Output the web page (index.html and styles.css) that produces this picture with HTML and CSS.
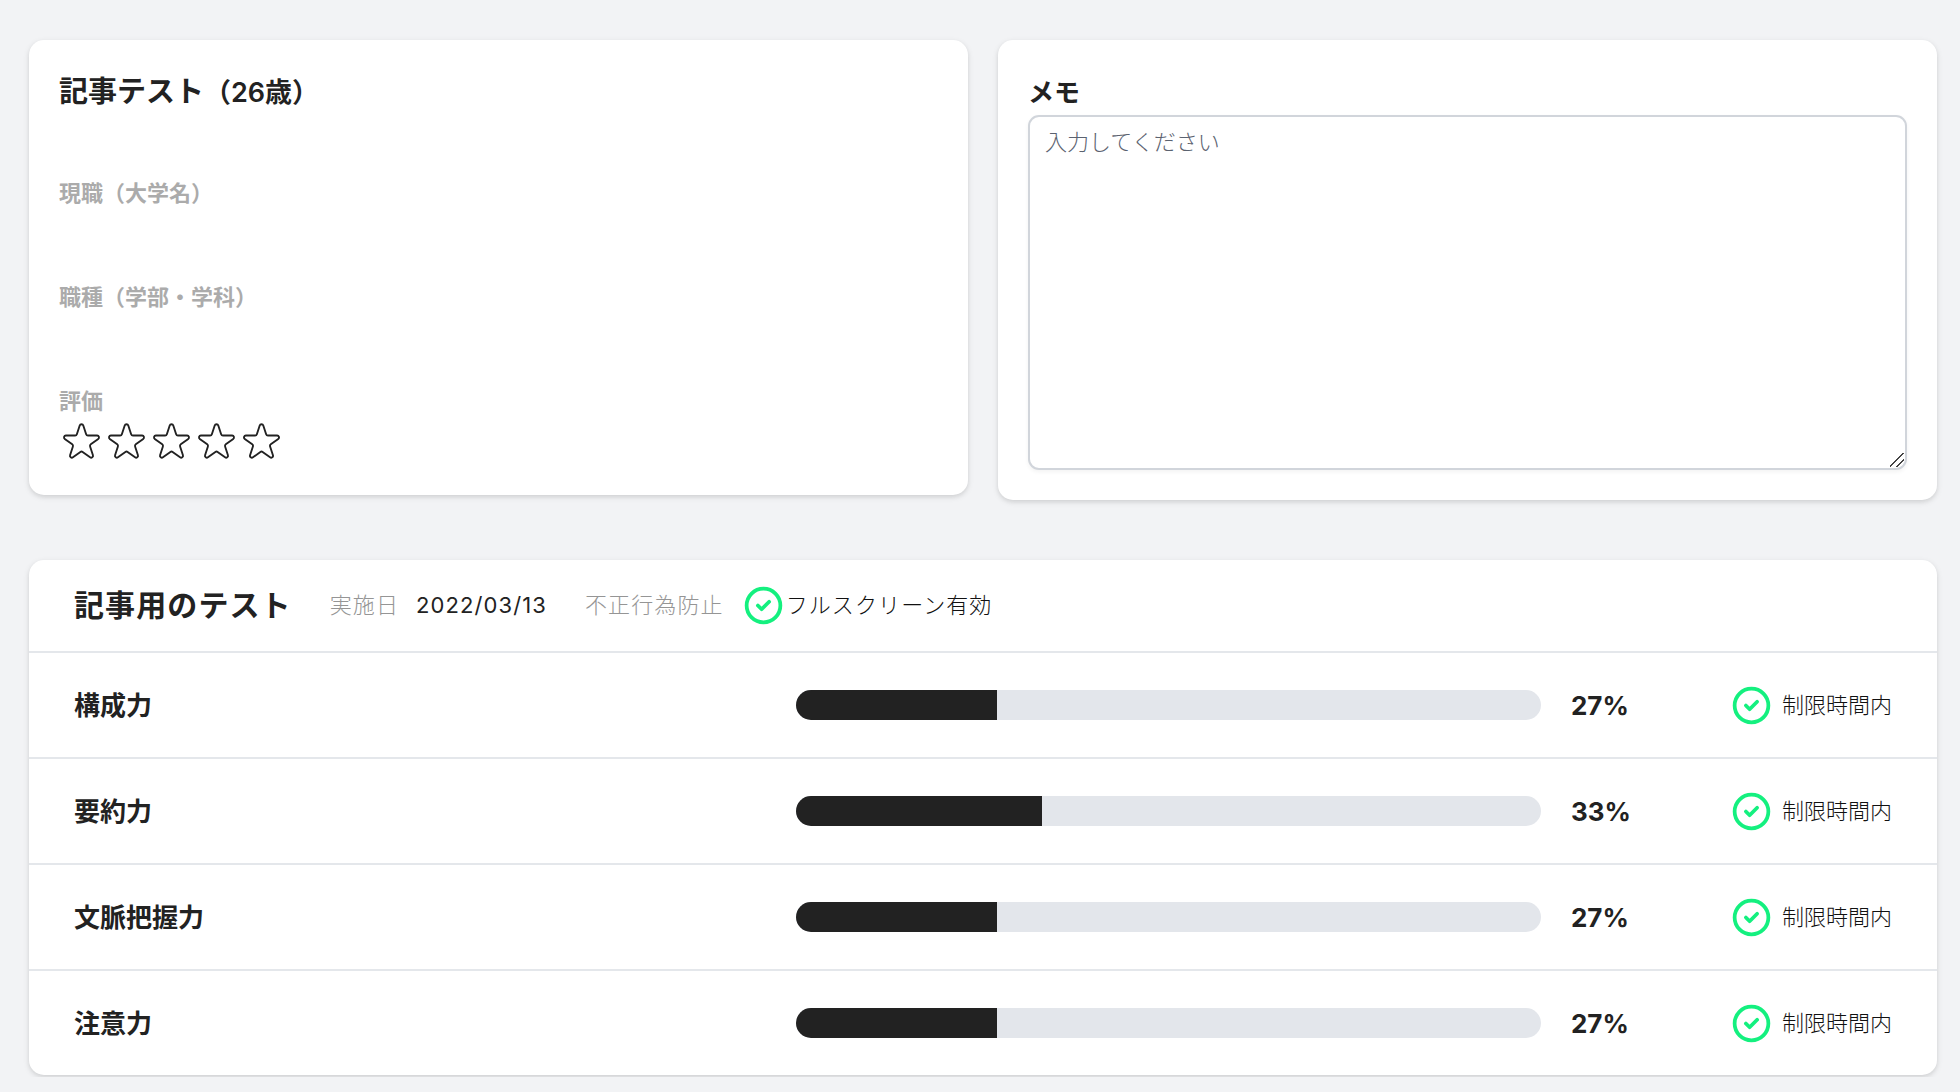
FILE: index.html
```html
<!DOCTYPE html>
<html lang="ja">
<head>
<meta charset="utf-8">
<meta name="viewport" content="width=device-width, initial-scale=1">
<title>記事テスト</title>
<link rel="stylesheet" href="styles.css">
</head>
<body>
<svg class="sprite" aria-hidden="true">
  <symbol id="star" viewBox="0 0 24 24"><path stroke-linecap="round" stroke-linejoin="round" d="M11.049 2.927c.3-.921 1.603-.921 1.902 0l1.519 4.674a1 1 0 00.95.69h4.915c.969 0 1.371 1.24.588 1.81l-3.976 2.888a1 1 0 00-.363 1.118l1.518 4.674c.3.922-.755 1.688-1.538 1.118l-3.976-2.888a1 1 0 00-1.176 0l-3.976 2.888c-.783.57-1.838-.197-1.538-1.118l1.518-4.674a1 1 0 00-.363-1.118l-3.976-2.888c-.784-.57-.38-1.81.588-1.81h4.914a1 1 0 00.951-.69l1.519-4.674z"/></symbol>
  <symbol id="check" viewBox="0 0 24 24"><path stroke-linecap="round" stroke-linejoin="round" d="M9 12l2 2 4-4m6 2a9 9 0 11-18 0 9 9 0 0118 0z"/></symbol>
</svg>
<main class="page">
  <div class="top">
    <section class="card profile">
      <h1 class="name">記事テスト<span class="age">（26歳）</span></h1>
      <dl class="fields">
        <div class="field"><dt>現職（大学名）</dt><dd></dd></div>
        <div class="field"><dt>職種（学部・学科）</dt><dd></dd></div>
      </dl>
      <h2 class="rating-label" id="rating">評価</h2>
      <div class="stars" role="group" aria-labelledby="rating">
        <button class="star" type="button" aria-label="1"><svg><use href="#star"/></svg></button>
        <button class="star" type="button" aria-label="2"><svg><use href="#star"/></svg></button>
        <button class="star" type="button" aria-label="3"><svg><use href="#star"/></svg></button>
        <button class="star" type="button" aria-label="4"><svg><use href="#star"/></svg></button>
        <button class="star" type="button" aria-label="5"><svg><use href="#star"/></svg></button>
      </div>
    </section>
    <section class="card memo">
      <label class="memo-label" for="memo">メモ</label>
      <textarea class="memo-input" id="memo" placeholder="入力してください"></textarea>
    </section>
  </div>

  <section class="card result">
    <header class="result-head">
      <h2 class="result-title">記事用のテスト</h2>
      <div class="meta"><span class="meta-key">実施日</span><span>2022/03/13</span></div>
      <div class="meta"><span class="meta-key">不正行為防止</span><span class="flag"><svg class="check"><use href="#check"/></svg>フルスクリーン有効</span></div>
    </header>
    <div class="row">
      <label class="skill" for="s1">構成力</label>
      <progress class="bar" id="s1" max="100" value="27"></progress>
      <span class="percent">27%</span>
      <span class="status"><svg class="check"><use href="#check"/></svg>制限時間内</span>
    </div>
    <div class="row">
      <label class="skill" for="s2">要約力</label>
      <progress class="bar" id="s2" max="100" value="33"></progress>
      <span class="percent">33%</span>
      <span class="status"><svg class="check"><use href="#check"/></svg>制限時間内</span>
    </div>
    <div class="row">
      <label class="skill" for="s3">文脈把握力</label>
      <progress class="bar" id="s3" max="100" value="27"></progress>
      <span class="percent">27%</span>
      <span class="status"><svg class="check"><use href="#check"/></svg>制限時間内</span>
    </div>
    <div class="row">
      <label class="skill" for="s4">注意力</label>
      <progress class="bar" id="s4" max="100" value="27"></progress>
      <span class="percent">27%</span>
      <span class="status"><svg class="check"><use href="#check"/></svg>制限時間内</span>
    </div>
  </section>
</main>
</body>
</html>
```
FILE: styles.css
```css
*, *::before, *::after { box-sizing: border-box; }

body {
  margin: 0;
  background: #f2f3f5;
  color: #222;
  font-family: Inter, "Noto Sans CJK JP", sans-serif;
  font-size: 22px;
  line-height: 37px;
}

h1, h2, dl, dd { margin: 0; }

.sprite { display: none; }

.page {
  padding: 40px 23px 2px 29px;
  overflow: hidden;
}

.top {
  display: grid;
  grid-template-columns: 1fr 1fr;
  align-items: start;
  gap: 30px;
  margin-bottom: 60px;
}

.card {
  background: #fff;
  border-radius: 15px;
  box-shadow: 0 2px 6px rgba(0, 0, 0, 0.1), 0 2px 4px rgba(0, 0, 0, 0.06);
}

.profile, .memo { padding: 30px; }

.name {
  margin-bottom: 60px;
  font-size: 29px;
  font-weight: 600;
  line-height: 44px;
}

.age { font-size: 27px; }

.field { margin-bottom: 30px; }

.field dt, .rating-label {
  color: #ababab;
  font-size: 22px;
  font-weight: 600;
}

.field dd { min-height: 37px; }

.stars { display: flex; }

.star {
  width: 45px;
  height: 45px;
  padding: 0;
  border: 0;
  background: none;
  color: inherit;
  cursor: pointer;
}

.star svg {
  display: block;
  width: 100%;
  height: 100%;
  fill: none;
  stroke: currentColor;
  stroke-width: 1;
}

.memo-label {
  display: block;
  font-size: 26px;
  font-weight: 600;
  line-height: 45px;
}

.memo-input {
  display: block;
  width: 100%;
  height: 355px;
  padding: 7px 15px;
  border: 2px solid #d1d5db;
  border-radius: 11px;
  background: #fff;
  box-shadow: 0 2px 4px rgba(0, 0, 0, 0.05);
  color: inherit;
  font: inherit;
  font-weight: 300;
  resize: vertical;
}

.memo-input::placeholder { color: #5b6270; }

.memo-input::-webkit-resizer {
  background: linear-gradient(135deg, transparent 9px, #444 9px, #444 10px, transparent 10px, transparent 14px, #444 14px, #444 15px, transparent 15px) no-repeat;
  background-size: 14px 14px;
}

.result-head {
  display: flex;
  align-items: center;
  gap: 38px;
  height: 91px;
  padding: 0 45px;
  letter-spacing: 0.05em;
}

.result-title {
  font-size: 30px;
  font-weight: 600;
}

.meta {
  display: flex;
  align-items: center;
  gap: 17px;
}

.meta-key {
  color: #959595;
  font-weight: 300;
}

.flag, .status {
  display: flex;
  align-items: center;
  color: #111;
  font-weight: 300;
}

.status { gap: 8px; }

.check {
  flex: none;
  width: 45px;
  height: 45px;
  fill: none;
  stroke: #14f07f;
  stroke-width: 2;
}

.row {
  display: grid;
  grid-template-columns: minmax(0, 1fr) 41% 128px auto;
  align-items: center;
  column-gap: 30px;
  height: 106px;
  padding: 0 45px;
  border-top: 2px solid #e4e7eb;
}

.skill, .percent {
  font-size: 26px;
  font-weight: 600;
}

.percent { font-weight: 700; }

.bar {
  appearance: none;
  display: block;
  width: 100%;
  height: 30px;
  border: 0;
  border-radius: 15px;
  background: #e3e6eb;
  overflow: hidden;
}

.bar::-webkit-progress-bar { background: #e3e6eb; }
.bar::-webkit-progress-value { background: #222; }
.bar::-moz-progress-bar { background: #222; }
```
